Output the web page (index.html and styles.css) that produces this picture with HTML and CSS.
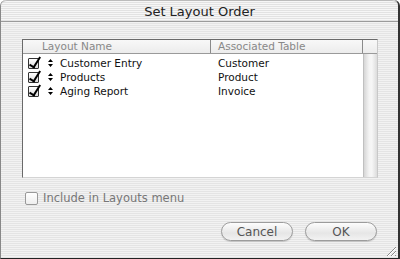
FILE: index.html
```html
<!DOCTYPE html>
<html lang="en">
<head>
  <meta charset="UTF-8" />
  <title>Set Layout Order</title>
  <link rel="stylesheet" href="styles.css">
</head>
<body>

<div class="window">
  <div class="titlebar">Set Layout Order</div>

  <div class="content">
    <div class="listbox">
      <div class="list-head">
        <div class="col-name">Layout Name</div>
        <div class="col-table">Associated Table</div>
        <div class="col-corner"></div>
      </div>
      <div class="list-body">
        <div class="rows">
          <div class="row">
            <span class="check on"></span>
            <svg class="mover" width="5" height="8" viewBox="0 0 5 8"><path d="M2.5 0 L5 3 L0 3 Z M0 5 L5 5 L2.5 8 Z" fill="#000"/></svg>
            <span class="name">Customer Entry</span>
            <span class="table">Customer</span>
          </div>
          <div class="row">
            <span class="check on"></span>
            <svg class="mover" width="5" height="8" viewBox="0 0 5 8"><path d="M2.5 0 L5 3 L0 3 Z M0 5 L5 5 L2.5 8 Z" fill="#000"/></svg>
            <span class="name">Products</span>
            <span class="table">Product</span>
          </div>
          <div class="row">
            <span class="check on"></span>
            <svg class="mover" width="5" height="8" viewBox="0 0 5 8"><path d="M2.5 0 L5 3 L0 3 Z M0 5 L5 5 L2.5 8 Z" fill="#000"/></svg>
            <span class="name">Aging Report</span>
            <span class="table">Invoice</span>
          </div>
        </div>
        <div class="scrollbar"></div>
      </div>
    </div>

    <label class="include">
      <span class="check"></span>
      Include in Layouts menu
    </label>

    <div class="buttons">
      <button class="btn">Cancel</button>
      <button class="btn">OK</button>
    </div>
  </div>

  <div class="grip">
    <svg width="12" height="12" viewBox="0 0 12 12">
      <path d="M2 11 L11 2 M6 11 L11 6 M10 11 L11 10" stroke="#8a8a8a" stroke-width="1" fill="none"/>
      <path d="M3 11 L11 3 M7 11 L11 7" stroke="#fff" stroke-width="1" fill="none"/>
    </svg>
  </div>
</div>

</body>
</html>
```

FILE: styles.css
```css
* { margin: 0; padding: 0; box-sizing: border-box; }
body { width: 400px; height: 259px; background: #fff; font-family: "DejaVu Sans", "Liberation Sans", sans-serif; font-size: 11px; color: #000; overflow: hidden; }

.window { position: relative; width: 400px; height: 259px; border-right: 2px solid #333; border-bottom: 1px solid #222; border-left: 1px solid #888; border-radius: 6px 6px 0 0; background: repeating-linear-gradient(to bottom, #f2f2f2 0, #f2f2f2 1px, #e4e4e4 1px, #e4e4e4 2px); display: flex; flex-direction: column; }

.titlebar { height: 22px; line-height: 21px; text-align: center; font-size: 13px; color: #222; border-top: 1px solid #bbb; border-radius: 6px 6px 0 0; border-bottom: 1px solid #9a9a9a; background: repeating-linear-gradient(to bottom, #f6f6f6 0, #f6f6f6 1px, #e2e2e2 1px, #e2e2e2 2px); }

.content { flex: 1; padding: 17px 21px 0 21px; display: flex; flex-direction: column; }

.listbox { width: 356px; height: 139px; border-top: 1px solid #6a6a6a; border-left: 1px solid #6a6a6a; border-right: 1px solid #c8c8c8; border-bottom: 1px solid #d4d4d4; background: #fff; display: flex; flex-direction: column; }

.list-head { display: flex; height: 14px; font-size: 10.5px; color: #888; background: linear-gradient(#f8f8f8, #ececec); border-bottom: 1px solid #9a9a9a; }
.list-head div { line-height: 13px; border-right: 1px solid #8a8a8a; }
.col-name { width: 188px; padding-left: 19px; }
.col-table { width: 152px; padding-left: 7px; }
.col-corner { flex: 1; border-right: none !important; }

.list-body { flex: 1; display: flex; }
.rows { flex: 1; padding-top: 2px; }
.row { display: flex; align-items: center; height: 14px; font-size: 10.5px; color: #111; }
.row .name { width: 158px; }

.check { display: inline-block; width: 11px; height: 11px; border: 1px solid #333; background: linear-gradient(#fff, #ddd); border-radius: 1px; position: relative; flex: none; }
.row .check { margin-left: 5px; margin-right: 9px; }
.check.on::after { content: ""; position: absolute; left: 3px; top: -4px; width: 4px; height: 11px; border-right: 2px solid #000; border-bottom: 2px solid #000; transform: rotate(32deg); }

.mover { flex: none; margin-right: 7px; }

.scrollbar { width: 14px; border-left: 1px solid #c0c0c0; background: linear-gradient(to right, #d6d6d6, #f4f4f4 40%, #f6f6f6 60%, #dcdcdc); }

.include { display: flex; align-items: center; margin-top: 13px; margin-left: 3px; color: #777; font-size: 11.5px; gap: 5px; }
.include .check { width: 13px; height: 13px; border: 1px solid #999; border-radius: 2px; background: linear-gradient(#fff, #eee); }

.buttons { display: flex; justify-content: flex-end; gap: 12px; margin-top: 17px; padding-right: 0; }
.btn { width: 72px; height: 19px; border: 1px solid #9c9c9c; border-radius: 10px; background: linear-gradient(#fdfdfd, #e6e6e6 60%, #f2f2f2); font-family: "DejaVu Sans", "Liberation Sans", sans-serif; font-size: 12px; color: #555; box-shadow: 0 1px 1px rgba(0,0,0,0.15); }

.grip { position: absolute; right: 1px; bottom: 1px; width: 12px; height: 12px; }
.grip svg { display: block; }
```
